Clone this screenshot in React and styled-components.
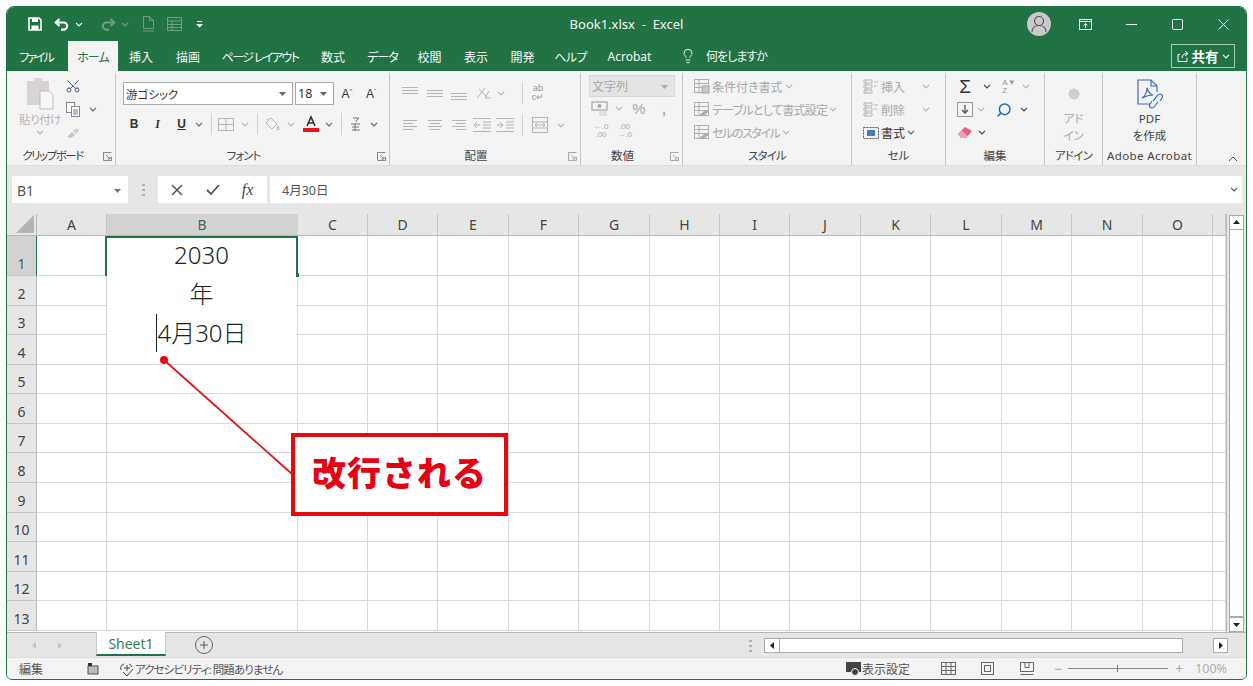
import React from 'react';
import styled, { createGlobalStyle } from 'styled-components';
import { Lightbulb, Search, Scissors } from 'lucide-react';

const FONT = '"Noto Sans", "Noto Sans CJK JP", sans-serif';
const GREEN = '#217346';
const OFF = '#b5b5b5';

const Global = createGlobalStyle`
  html, body { margin: 0; padding: 0; background: #fff; }
  body { font-family: ${FONT}; font-feature-settings: "palt"; color: #333; }
  * { box-sizing: border-box; }
`;

const Win = styled.div`
  position: relative;
  width: 1241px;
  height: 674px;
  margin: 6px 0 0 6px;
  border: 1px solid ${GREEN};
  border-radius: 8px 8px 6px 6px;
  overflow: hidden;
  display: flex;
  flex-direction: column;
  background: #f3f3f3;
`;
const TitleBar = styled.div`
  height: 34px;
  background: ${GREEN};
  display: grid;
  grid-template-columns: 1fr auto 1fr;
  align-items: center;
  color: #fff;
`;
const Qat = styled.div`
  display: flex;
  align-items: center;
  padding-left: 14px;
`;
const Title = styled.div`
  font-size: 13px;
  white-space: pre;
  color: #f2f7f4;
`;
const WinBtns = styled.div`
  display: flex;
  justify-content: flex-end;
  align-items: center;
`;
const Slot = styled.div`
  flex: none;
  width: ${p => p.$w}px;
  margin-left: ${p => p.$ml || 0}px;
  height: 100%;
  display: flex;
  align-items: center;
  justify-content: center;
`;
const Avatar = styled.div`
  width: 24px;
  height: 24px;
  border-radius: 50%;
  background: #c9c9c9;
  display: flex;
  align-items: center;
  justify-content: center;
`;
const TabRow = styled.div`
  height: 30px;
  background: ${GREEN};
  display: flex;
  align-items: stretch;
  padding-left: 1px;
  position: relative;
`;
const Tab = styled.div`
  flex: none;
  width: ${p => p.$w}px;
  margin-left: ${p => p.$ml || 0}px;
  display: flex;
  align-items: center;
  justify-content: center;
  padding-top: 1px;
  font-size: 12px;
  letter-spacing: ${p => p.$ls || 0}px;
  white-space: nowrap;
  color: ${p => (p.$on ? '#2b6e4a' : '#f4f8f6')};
  background: ${p => (p.$on ? '#f3f3f3' : 'transparent')};
`;
const Tell = styled.div`
  display: flex;
  align-items: center;
  gap: 4px;
  margin-left: 17px;
  font-size: 12px;
  letter-spacing: -1px;
  color: #f4f8f6;
`;
const Share = styled.div`
  margin: 3px 11px 3px auto;
  width: 64px;
  display: flex;
  align-items: center;
  justify-content: center;
  gap: 3px;
  border: 1px solid #a5cbb6;
  font-size: 13.5px;
  font-weight: 700;
  color: #fff;
`;

const Ribbon = styled.div`
  height: 94px;
  display: flex;
  padding-left: 1px;
  background: #f3f3f3;
`;
const Group = styled.div`
  flex: none;
  width: ${p => p.$w}px;
  display: flex;
  flex-direction: column;
  margin: 2px 0 0;
  border-right: 1px solid ${p => (p.$plain ? 'transparent' : '#c4c4c4')};
  position: relative;
`;
const GroupBody = styled.div`
  flex: 1;
  min-height: 0;
  display: flex;
  flex-direction: column;
  padding-top: ${p => p.$top ?? 8}px;
  padding-left: ${p => p.$left ?? 0}px;
  gap: ${p => p.$gap ?? 0}px;
`;
const GroupLabel = styled.div`
  height: 18px;
  line-height: 18px;
  margin-bottom: 0;
  padding-right: ${p => (p.$launch ? 18 : 0)}px;
  text-align: center;
  font-size: 11.5px;
  letter-spacing: ${p => p.$ls || 0}px;
  color: #444;
  white-space: nowrap;
`;
const Launch = styled.span`
  position: absolute;
  right: 3px;
  bottom: 4px;
  width: 9px;
  height: 9px;
  display: flex;
`;
const Row = styled.div`
  display: flex;
  align-items: center;
  height: ${p => p.$h}px;
`;
const ClipCols = styled.div`
  display: flex;
  height: 74px;
`;
const PasteCol = styled.div`
  width: 50px;
  display: flex;
  flex-direction: column;
  align-items: center;
  color: ${OFF};
  font-size: 11.5px;
  letter-spacing: -0.5px;
  line-height: 14px;
  gap: 3px;
`;
const SmallCol = styled.div`
  display: flex;
  flex-direction: column;
  gap: 0;
  margin-left: 0;
`;
const Combo = styled.div`
  flex: none;
  width: ${p => p.$w}px;
  height: ${p => p.$h || 23}px;
  margin-left: ${p => p.$ml || 0}px;
  display: flex;
  align-items: center;
  justify-content: space-between;
  padding: 0 5px 0 2px;
  border: 1px solid ${p => (p.$off ? '#d8d8d8' : '#ababab')};
  background: ${p => (p.$off ? '#e4e4e4' : '#fff')};
  color: ${p => (p.$off ? '#a8a8a8' : '#333')};
  font-size: ${p => p.$fs || 11.5}px;
`;
const RowSep = styled.div`
  width: 1px;
  height: 22px;
  background: #d0d0d0;
`;
const Glyph = styled.span`
  font-family: ${p => (p.$serif ? '"Liberation Serif", serif' : '"Liberation Sans", sans-serif')};
  font-weight: ${p => p.$wt || 700};
  font-style: ${p => (p.$it ? 'italic' : 'normal')};
  text-decoration: ${p => (p.$ul ? 'underline' : 'none')};
  font-size: ${p => p.$fs || 12}px;
  color: ${p => p.$c || '#333'};
`;
const StyleRow = styled.div`
  display: flex;
  align-items: center;
  height: 23px;
  gap: 2px;
  font-size: 12px;
  letter-spacing: ${p => p.$ls || 0}px;
  white-space: nowrap;
  color: ${p => (p.$on ? '#333' : '#a9a9a9')};
`;
const BigLabel = styled.div`
  text-align: center;
  font-size: 11.5px;
  line-height: 17px;
  color: ${p => (p.$off ? '#a9a9a9' : '#444')};
`;
const BigIcon = styled.div`
  height: 32px;
  display: flex;
  align-items: center;
  justify-content: center;
`;
const Collapse = styled.div`
  flex: 1;
  display: flex;
  justify-content: flex-end;
  align-items: flex-end;
  padding: 0 8px 3px 0;
`;

const FormulaArea = styled.div`
  height: 49px;
  display: flex;
  align-items: flex-start;
  padding: 10px 4px 0 5px;
  background: #e6e6e6;
  border-top: 1px solid #dcdcdc;
`;
const NameBox = styled.div`
  width: 116px;
  height: 27px;
  background: #fff;
  display: flex;
  align-items: center;
  justify-content: space-between;
  padding: 2px 6px 0 5px;
  font-size: 14px;
  color: #555;
`;
const Dots = styled.div`
  width: 30px;
  height: 27px;
  display: flex;
  align-items: center;
  justify-content: center;
`;
const FxBox = styled.div`
  width: 109px;
  height: 27px;
  background: #fff;
  display: flex;
  align-items: center;
`;
const FxInput = styled.div`
  flex: 1;
  height: 27px;
  margin-left: 3px;
  background: #fff;
  display: flex;
  align-items: center;
  justify-content: space-between;
  padding: 0 4px 0 12px;
  font-size: 12.5px;
  color: #555;
`;

const SheetArea = styled.div`
  position: relative;
  height: 418px;
  display: flex;
  background: #fff;
`;
const SheetGrid = styled.div`
  display: grid;
  grid-template-columns: 30px 70px 191px 70px 70px 71px 70px 71px 70px 70px 71px 70px 71px 70px 71px 70px 13px;
  grid-template-rows: 22px 40px repeat(12, 29.58px);
  width: 1219px;
  overflow: hidden;
  background: #fff;
`;
const Corner = styled.div`
  background: #e6e6e6;
  border-right: 1px solid #b9b9b9;
  border-bottom: 1px solid #b9b9b9;
  display: flex;
  align-items: flex-end;
  justify-content: flex-end;
  padding: 0 2px 2px 0;
`;
const ColHead = styled.div`
  display: flex;
  align-items: center;
  justify-content: center;
  font-size: 14px;
  color: ${p => (p.$on ? '#3f6b54' : '#444')};
  background: ${p => (p.$on ? '#d2d2d2' : '#e6e6e6')};
  border-right: 1px solid ${p => (p.$on ? '#d2d2d2' : '#c6c6c6')};
  border-bottom: 1px solid #b9b9b9;
`;
const RowHead = styled.div`
  display: flex;
  align-items: flex-end;
  justify-content: center;
  padding-bottom: 2px;
  font-size: 14px;
  color: ${p => (p.$on ? '#3f6b54' : '#444')};
  background: ${p => (p.$on ? '#d2d2d2' : '#e6e6e6')};
  border-right: 1px solid ${p => (p.$on ? GREEN : '#b9b9b9')};
  border-bottom: 1px solid #c6c6c6;
`;
const Cell = styled.div`
  border-right: 1px solid #d9d9d9;
  border-bottom: 1px solid #d9d9d9;
`;
const Selection = styled.div`
  position: absolute;
  left: 98px;
  top: 22px;
  width: 193px;
  height: 40px;
  border: solid ${GREEN};
  border-width: 2px 2px 0 2px;
`;
const Handle = styled.div`
  position: absolute;
  left: 288px;
  top: 59px;
  width: 4px;
  height: 4px;
  background: ${GREEN};
`;
const EditBox = styled.div`
  position: absolute;
  left: 100px;
  top: 24px;
  width: 189px;
  height: 126px;
  background: #fff;
  text-align: center;
  font-size: 24px;
  line-height: 33px;
  font-feature-settings: normal;
  color: #222;
  font-weight: 300;
`;
const EditLine = styled.div`
  height: 39px;
`;
const Caret = styled.span`
  display: inline-block;
  width: 1px;
  height: 38px;
  background: #222;
  margin: -10px 0;
`;
const Pointer = styled.svg`
  position: absolute;
  left: 0;
  top: 0;
  pointer-events: none;
`;
const Callout = styled.div`
  position: absolute;
  left: 284px;
  top: 219px;
  width: 217px;
  height: 83px;
  border: 4px solid #e60b0b;
  background: #fff;
  display: flex;
  align-items: center;
  justify-content: center;
  padding-bottom: 7px;
  font-size: 34px;
  font-weight: 900;
  color: #e60012;
  letter-spacing: 1px;
  font-feature-settings: normal;
`;
const VScroll = styled.div`
  flex: 1;
  display: flex;
  flex-direction: column;
  align-items: center;
  padding-top: 1px;
  background: #e6e6e6;
  border-left: 1px solid #b9b9b9;
`;
const ScrollBtn = styled.div`
  flex: none;
  width: ${p => p.$w || 15}px;
  height: 15px;
  background: #fff;
  border: 1px solid #ababab;
  display: flex;
  align-items: center;
  justify-content: center;
`;
const VThumb = styled.div`
  flex: 1;
  width: 15px;
  background: #fff;
  border: 1px solid #ababab;
  border-top: 0;
  margin-bottom: 0;
`;

const TabBar = styled.div`
  height: 25px;
  display: flex;
  align-items: flex-start;
  background: #e6e6e6;
  border-top: 1px solid #b9b9b9;
`;
const SheetTab = styled.div`
  width: 70px;
  height: 24px;
  margin-left: 10px;
  margin-top: -1px;
  background: #fff;
  border-bottom: 2px solid ${GREEN};
  border-left: 1px solid #c6c6c6;
  border-right: 1px solid #c6c6c6;
  display: flex;
  align-items: center;
  justify-content: center;
  font-size: 14px;
  color: #3a7c5b;
`;
const TabNav = styled.div`
  display: flex;
  width: 79px;
  height: 24px;
`;
const AddSheet = styled.div`
  width: 18px;
  height: 18px;
  margin: 3px 0 0 29px;
  border: 1px solid #666;
  border-radius: 50%;
  display: flex;
  align-items: center;
  justify-content: center;
`;
const HScroll = styled.div`
  display: flex;
  align-items: flex-start;
  height: 22px;
  padding-top: 5px;
  margin-left: auto;
  margin-right: 18px;
`;
const HTrack = styled.div`
  width: 403px;
  height: 15px;
  background: #fff;
  border: 1px solid #ababab;
  border-left: 0;
  margin-right: 30px;
`;
const DotCol = styled.div`
  width: 30px;
  height: 15px;
  display: flex;
  align-items: center;
  justify-content: center;
  margin-right: -1px;
`;

const Status = styled.div`
  flex: 1;
  display: flex;
  align-items: center;
  background: #f3f3f3;
  border-top: 1px solid #dcdcdc;
  font-size: 11.5px;
  color: #555;
`;
const Stat = styled.span`
  margin-left: ${p => p.$ml || 0}px;
  color: ${p => p.$c || '#555'};
  font-size: ${p => p.$fs || 11.5}px;
  letter-spacing: ${p => p.$ls || 0}px;
  display: flex;
  align-items: center;
  white-space: nowrap;
`;
const StatRight = styled.div`
  margin-left: auto;
  display: flex;
  align-items: center;
  height: 100%;
`;
const ZoomTrack = styled.div`
  position: relative;
  width: 100px;
  height: 1px;
  background: #8a8a8a;
  margin: 0 7px 0 6px;
`;
const ZoomTick = styled.div`
  position: absolute;
  left: 49px;
  top: -3px;
  width: 1px;
  height: 7px;
  background: #777;
`;

const Chev = ({ c = '#666' }) => (
  <svg width="8" height="5" viewBox="0 0 8 5"><path d="M1 .8l3 3 3-3" fill="none" stroke={c} strokeWidth="1.2" /></svg>
);
const Tri = ({ d, c = '#222' }) => {
  const paths = { up: 'M1 6h7L4.5 2z', down: 'M1 3h7L4.5 7z', left: 'M6 1v7L2 4.5z', right: 'M3 1v7l4-3.5z' };
  return <svg width="9" height="9" viewBox="0 0 9 9"><path d={paths[d]} fill={c} /></svg>;
};
const LaunchIcon = ({ c = '#888' }) => (
  <svg width="9" height="9" viewBox="0 0 9 9" fill="none" stroke={c}><path d="M.5 4V.5h8M.5 .5v8h8V5" /><path d="M3 3l4 4M7 4.5V7H4.5" /></svg>
);
const AlignIcon = ({ v, h }) => {
  const w = [14, 10, 14, 10];
  if (h) {
    const x = i => (h === 'c' ? 1 + (14 - w[i]) / 2 : h === 'r' ? 15 - w[i] : 1);
    return (
      <svg width="16" height="12" viewBox="0 0 16 12" stroke={OFF}>
        {[1.5, 4.5, 7.5, 10.5].map((y, i) => <path key={y} d={`M${x(i)} ${y}h${w[i]}`} />)}
      </svg>
    );
  }
  const y0 = v === 't' ? 1 : v === 'm' ? 4 : 7;
  return (
    <svg width="18" height="14" viewBox="0 0 18 14" stroke={OFF}>
      {[0, 3, 6].map(d => <path key={d} d={`M1 ${y0 + d + 0.5}h16`} />)}
    </svg>
  );
};
const IndentIcon = ({ rev }) => (
  <svg width="18" height="16" viewBox="0 0 18 16" fill="none" stroke={OFF}>
    <path d="M0 1.5h18M0 14.5h18M10 5h8M10 8h8M10 11h8" />
    <path d={rev ? 'M7 8H1m3-3L1 8l3 3' : 'M1 8h6M4 5l3 3-3 3'} stroke="#9db8c9" />
  </svg>
);
const SmallDoc = ({ c = OFF }) => (
  <svg width="16" height="16" viewBox="0 0 16 16" fill="none" stroke={c}><rect x=".5" y="2.5" width="15" height="12" /><path d="M.5 8.500h15M8 2.500v12" /></svg>
);

function Qa() {
  return (
    <Qat>
      <Slot $w={28}>
        <svg width="14" height="14" viewBox="0 0 14 14"><path d="M1 1h10l2 2v10H1z" fill="none" stroke="#fff" strokeWidth="1.6" /><path d="M4 1h6v4H4zM3.5 8.5h7V13h-7z" fill="#fff" /></svg>
      </Slot>
      <Slot $w={26}>
        <svg width="16" height="13" viewBox="0 0 16 13" fill="none" stroke="#fff" strokeWidth="2.2"><path d="M5.5 1L1.8 4.5 5.5 8" /><path d="M2 4.5h7.5a3.6 3.6 0 0 1 0 7.2H7" /></svg>
      </Slot>
      <Slot $w={8}><Chev c="#fff" /></Slot>
      <Slot $w={24} $ml={13}>
        <svg width="16" height="13" viewBox="0 0 16 13" fill="none" stroke="#6d9f85" strokeWidth="2"><path d="M10.5 1l3.7 3.5L10.5 8" /><path d="M14 4.5H6.5a3.6 3.6 0 0 0 0 7.2H9" /></svg>
      </Slot>
      <Slot $w={10}><Chev c="#6d9f85" /></Slot>
      <Slot $w={24} $ml={6}>
        <svg width="13" height="16" viewBox="0 0 13 16" fill="none" stroke="#6d9f85"><path d="M1.5.5h6l4 4v8h-10z" /><path d="M7.5.5v4h4M1 15h11" /></svg>
      </Slot>
      <Slot $w={24} $ml={2}>
        <svg width="15" height="14" viewBox="0 0 15 14" fill="none" stroke="#6d9f85"><rect x=".5" y=".5" width="14" height="13" /><path d="M.5 4h14M.5 7.5h14M.5 10.5h14M5 4v9" /></svg>
      </Slot>
      <Slot $w={20} $ml={3}>
        <svg width="7" height="8" viewBox="0 0 7 8" fill="#fff"><path d="M1 1h5v1H1zM0 4h7L3.5 7.5z" /></svg>
      </Slot>
    </Qat>
  );
}

function Clipboard() {
  return (
    <Group $w={108}>
      <GroupBody $top={1} $left={7}>
        <ClipCols>
          <PasteCol>
            <svg width="28" height="33" viewBox="0 0 28 33" style={{ marginTop: 3 }}>
              <path d="M1 4h7V1h8v3h7v24H1z" fill="#d6d2d6" />
              <path d="M14 14h9l4 4v14H14z" fill="#f5f5f5" stroke="#bdbdbd" />
            </svg>
            <span>貼り付け</span>
            <Chev c={OFF} />
          </PasteCol>
          <SmallCol>
            <Row $h={24}>
              <Slot $w={16}><Scissors size={18} color="#4a5f80" strokeWidth={1.5} style={{ transform: 'rotate(-90deg)' }} /></Slot>
            </Row>
            <Row $h={23}>
              <Slot $w={16}>
                <svg width="14" height="15" viewBox="0 0 14 15" fill="#fff" stroke="#888"><rect x=".5" y=".5" width="8" height="10" /><rect x="5.5" y="4.5" width="8" height="10" /><path d="M7 8h5M7 10h5M7 12h5" stroke="#5b7fa8" /></svg>
              </Slot>
              <Slot $w={24} $ml={0}><Chev /></Slot>
            </Row>
            <Row $h={23}>
              <Slot $w={16}>
                <svg width="14" height="12" viewBox="0 0 14 12"><path d="M1 10l5-5 3 3-4 3z" fill="#c6c6c6" /><path d="M7 4l4-3 2 2-3 4z" fill="#d0d0d0" /></svg>
              </Slot>
            </Row>
          </SmallCol>
        </ClipCols>
      </GroupBody>
      <GroupLabel $launch $ls={-1.5}>クリップボード</GroupLabel>
      <Launch><LaunchIcon /></Launch>
    </Group>
  );
}

function Font() {
  return (
    <Group $w={274}>
      <GroupBody $top={9} $left={7} $gap={7}>
        <Row $h={23}>
          <Combo $w={170}>游ゴシック<Tri d="down" c="#666" /></Combo>
          <Combo $w={39} $ml={2} $fs={12.5}>18<Tri d="down" c="#666" /></Combo>
          <Slot $w={24} $ml={1}><Glyph $fs={12} $wt={400}>A<sup style={{ fontSize: 6 }}>^</sup></Glyph></Slot>
          <Slot $w={24}><Glyph $fs={12} $wt={400}>A<sup style={{ fontSize: 6 }}>ˇ</sup></Glyph></Slot>
        </Row>
        <Row $h={24}>
          <Slot $w={22}><Glyph>B</Glyph></Slot>
          <Slot $w={25}><Glyph $serif $it>I</Glyph></Slot>
          <Slot $w={23}><Glyph $ul>U</Glyph></Slot>
          <Slot $w={12}><Chev /></Slot>
          <Slot $w={12}><RowSep /></Slot>
          <Slot $w={18}><SmallDoc /></Slot>
          <Slot $w={20}><Chev c={OFF} /></Slot>
          <Slot $w={4}><RowSep /></Slot>
          <Slot $w={26}>
            <svg width="16" height="15" viewBox="0 0 16 15" fill="none" stroke={OFF}><path d="M7 1l6 6-5 5-6-6zM3 3l2-2M14 9c1 2 1.500 3 .5 4s-2-1-.5-4z" /></svg>
          </Slot>
          <Slot $w={12}><Chev c={OFF} /></Slot>
          <Slot $w={28}>
            <svg width="18" height="18" viewBox="0 0 18 18">
              <path d="M5 11l4-9 4 9M6.500 8h5" fill="none" stroke="#333" strokeWidth="1.600" />
              <rect x="1" y="13" width="16" height="4" fill="#e0191f" />
            </svg>
          </Slot>
          <Slot $w={8}><Chev /></Slot>
          <Slot $w={16}><RowSep /></Slot>
          <Slot $w={14}>
            <svg width="12" height="15" viewBox="0 0 12 15" fill="none" stroke="#777"><path d="M3 1h6L6 4v1M1 7h9M5 7v7M2 10h7M2 13h8" /></svg>
          </Slot>
          <Slot $w={22}><Chev /></Slot>
        </Row>
      </GroupBody>
      <GroupLabel $launch $ls={-1}>フォント</GroupLabel>
      <Launch><LaunchIcon /></Launch>
    </Group>
  );
}

function Align() {
  return (
    <Group $w={191}>
      <GroupBody $top={8} $left={7} $gap={8}>
        <Row $h={24}>
          <Slot $w={25}><AlignIcon v="t" /></Slot>
          <Slot $w={25}><AlignIcon v="m" /></Slot>
          <Slot $w={24}><AlignIcon v="b" /></Slot>
          <Slot $w={26}>
            <svg width="18" height="14" viewBox="0 0 18 14" fill="none" stroke={OFF}><path d="M2 12L10 2M4 3l8 8M14 5l-4 7h6" /></svg>
          </Slot>
          <Slot $w={8}><Chev c={OFF} /></Slot>
          <Slot $w={24} $ml={5}><RowSep /></Slot>
          <Slot $w={8}>
            <Glyph $fs={9} $wt={400} $c="#999" style={{ lineHeight: '9px', textAlign: 'center' }}>ab<br />c↵</Glyph>
          </Slot>
        </Row>
        <Row $h={24}>
          <Slot $w={25}><AlignIcon h="l" /></Slot>
          <Slot $w={25}><AlignIcon h="c" /></Slot>
          <Slot $w={24}><AlignIcon h="r" /></Slot>
          <Slot $w={22}><IndentIcon rev /></Slot>
          <Slot $w={24}><IndentIcon /></Slot>
          <Slot $w={10}><RowSep /></Slot>
          <Slot $w={26}>
            <svg width="16" height="16" viewBox="0 0 16 16" fill="none" stroke={OFF}><rect x=".5" y=".5" width="15" height="15" /><path d="M.5 5h15M.5 11h15M3 8h10M3 8l2-2M3 8l2 2M13 8l-2-2M13 8l-2 2" /></svg>
          </Slot>
          <Slot $w={16}><Chev c={OFF} /></Slot>
        </Row>
      </GroupBody>
      <GroupLabel $launch>配置</GroupLabel>
      <Launch><LaunchIcon c="#aaa" /></Launch>
    </Group>
  );
}

function Numbers() {
  return (
    <Group $w={102}>
      <GroupBody $top={2} $left={8} $gap={1}>
        <Row $h={22}>
          <Combo $w={86} $h={22} $off $fs={12}>文字列<Tri d="down" c="#aaa" /></Combo>
        </Row>
        <Row $h={21}>
          <Slot $w={20}>
            <svg width="17" height="15" viewBox="0 0 17 15"><rect x="1" y="1" width="15" height="8" fill="none" stroke={OFF} strokeWidth="1.500" /><circle cx="8.500" cy="5" r="2" fill="#8fb59f" /><path d="M8 10h8M8 12h8M8 14h8" stroke="#ccc" /></svg>
          </Slot>
          <Slot $w={20}><Chev c={OFF} /></Slot>
          <Slot $w={20}><Glyph $fs={15} $wt={400} $c="#aaa">%</Glyph></Slot>
          <Slot $w={30}><Glyph $fs={14} $c="#aaa">,</Glyph></Slot>
        </Row>
        <Row $h={22}>
          <Slot $w={24}><Glyph $fs={8} $wt={400} $c="#aaa" style={{ lineHeight: '8px', textAlign: 'center' }}>←.0<br />.00</Glyph></Slot>
          <Slot $w={23}><Glyph $fs={8} $wt={400} $c="#aaa" style={{ lineHeight: '8px', textAlign: 'center' }}>.00<br />→.0</Glyph></Slot>
        </Row>
      </GroupBody>
      <GroupLabel $launch>数値</GroupLabel>
      <Launch><LaunchIcon c="#aaa" /></Launch>
    </Group>
  );
}

const StyleIcon = ({ kind }) => (
  <svg width="16" height="15" viewBox="0 0 16 15" fill="none" stroke="#b0b0b0">
    <rect x=".5" y=".5" width="14" height="13" />
    <path d="M.5 4.500h14M.5 8.500h14M5 .5v13" />
    {kind === 'cond' && <rect x="8" y="7" width="7" height="7" fill="#c8c8c8" stroke="#aaa" />}
    {kind !== 'cond' && <path d="M6 13l6-5 3 1-6 5z" fill="#aaa" />}
  </svg>
);

function Styles() {
  return (
    <Group $w={169}>
      <GroupBody $top={2} $left={11}>
        <StyleRow><StyleIcon kind="cond" /> 条件付き書式 <Chev c={OFF} /></StyleRow>
        <StyleRow $ls={-0.7}><StyleIcon />テーブルとして書式設定 <Chev c={OFF} /></StyleRow>
        <StyleRow $ls={-1.4}><StyleIcon />セルのスタイル <Chev c={OFF} /></StyleRow>
      </GroupBody>
      <GroupLabel $ls={-0.8}>スタイル</GroupLabel>
    </Group>
  );
}

const CellIcon = ({ c = OFF }) => (
  <svg width="16" height="15" viewBox="0 0 16 15" fill="none" stroke={c}><path d="M1 1h8v3H1zM1 6h8v3H1zM1 11h8v3H1zM11 3h4M11 7h3M3 1v13" /></svg>
);

function Cells() {
  return (
    <Group $w={94}>
      <GroupBody $top={2} $left={11}>
        <StyleRow><CellIcon />挿入<Slot $w={30} $ml={4}><Chev c={OFF} /></Slot></StyleRow>
        <StyleRow><CellIcon />削除<Slot $w={30} $ml={4}><Chev c={OFF} /></Slot></StyleRow>
        <StyleRow $on>
          <svg width="16" height="15" viewBox="0 0 16 15" fill="none" stroke="#555"><rect x=".5" y="2.500" width="15" height="11" strokeDasharray="2 1" /><rect x="4" y="5" width="8" height="6" fill="#3f7fbf" stroke="none" /></svg>
          書式 <Chev />
        </StyleRow>
      </GroupBody>
      <GroupLabel>セル</GroupLabel>
    </Group>
  );
}

function Edit() {
  return (
    <Group $w={99}>
      <GroupBody $top={2} $left={10}>
        <Row $h={23}>
          <Slot $w={18}><Glyph $fs={19} $wt={400} $c="#333">Σ</Glyph></Slot>
          <Slot $w={26}><Chev c="#444" /></Slot>
          <Slot $w={18}><Glyph $fs={8} $wt={400} $c="#999" style={{ lineHeight: '8px' }}>A▼<br />Z</Glyph></Slot>
          <Slot $w={16}><Chev c={OFF} /></Slot>
        </Row>
        <Row $h={23}>
          <Slot $w={18}>
            <svg width="16" height="15" viewBox="0 0 16 15" fill="none" stroke="#999"><rect x=".5" y=".5" width="15" height="14" /><path d="M8 3v8M5 8l3 3 3-3" stroke="#555" strokeWidth="1.300" /></svg>
          </Slot>
          <Slot $w={14}><Chev c={OFF} /></Slot>
          <Slot $w={32}><Search size={16} color="#1f6cb5" strokeWidth={2.2} style={{ transform: 'scaleX(-1)' }} /></Slot>
          <Slot $w={8}><Chev c="#444" /></Slot>
        </Row>
        <Row $h={23}>
          <Slot $w={18}>
            <svg width="16" height="13" viewBox="0 0 16 13"><path d="M1 8l7-7 7 4-6 7H4z" fill="#e0607e" /><path d="M1 8l3 4h5l1.500-2-5-5z" fill="#f0a0b4" /></svg>
          </Slot>
          <Slot $w={16}><Chev c="#444" /></Slot>
        </Row>
      </GroupBody>
      <GroupLabel>編集</GroupLabel>
    </Group>
  );
}

function Addin() {
  return (
    <Group $w={58}>
      <GroupBody $top={5}>
        <BigIcon>
          <svg width="12" height="12"><circle cx="6" cy="6" r="5.500" fill="#cfcfcf" /></svg>
        </BigIcon>
        <BigLabel $off>アド<br />イン</BigLabel>
      </GroupBody>
      <GroupLabel $ls={-0.8}>アドイン</GroupLabel>
    </Group>
  );
}

function AdobeGroup() {
  return (
    <Group $w={94}>
      <GroupBody $top={5}>
        <BigIcon>
          <svg width="28" height="30" viewBox="0 0 28 30" fill="none" stroke="#3b6fb5" strokeWidth="1.200">
            <path d="M14 25H2V1h13l6 6v6" />
            <path d="M15 1v6h6" />
            <path d="M6 19c3-2 5-6 5-10 1 4 3 6 6 7-3 0-7 1-11 3z" />
            <path d="M17 22l5-6a2.500 2.500 0 0 1 4 3l-2 3M22 23l-4 5a2.500 2.500 0 0 1-4-3l2-3" />
          </svg>
        </BigIcon>
        <BigLabel>PDF<br />を作成</BigLabel>
      </GroupBody>
      <GroupLabel $ls={0.4}>Adobe Acrobat</GroupLabel>
    </Group>
  );
}

const COLS = ['A', 'B', 'C', 'D', 'E', 'F', 'G', 'H', 'I', 'J', 'K', 'L', 'M', 'N', 'O', ''];
const ROWS = [1, 2, 3, 4, 5, 6, 7, 8, 9, 10, 11, 12, 13];
const TABS = [
  ['ファイル', 56, 0, -2], ['ホーム', 50, 4, -1], ['挿入', 46], ['描画', 48], ['ページ レイアウト', 96, 0, -1.6], ['数式', 50],
  ['データ', 49, 0, -1], ['校閲', 45], ['表示', 48], ['開発', 45], ['ヘルプ', 51, 0, -0.6], ['Acrobat', 67],
];

export default function App() {
  return (
    <>
      <Global />
      <Win>
        <TitleBar>
          <Qa />
          <Title>Book1.xlsx  -  Excel</Title>
          <WinBtns>
            <Slot $w={46}>
              <Avatar>
                <svg width="16" height="18" viewBox="0 0 16 18" fill="none" stroke="#555" strokeWidth="1.200"><circle cx="8" cy="6" r="4.500" /><path d="M1 17c0-4 3-6.500 7-6.500s7 2.500 7 6.500" /></svg>
              </Avatar>
            </Slot>
            <Slot $w={46}>
              <svg width="13" height="11" viewBox="0 0 13 11" fill="none" stroke="#fff"><rect x=".5" y=".5" width="12" height="10" /><path d="M.5 2.500h12M6.500 9V4.500M4.500 6.500l2-2 2 2" /></svg>
            </Slot>
            <Slot $w={46}><svg width="11" height="1"><rect width="11" height="1" fill="#fff" /></svg></Slot>
            <Slot $w={46}><svg width="11" height="11" fill="none" stroke="#fff"><rect x=".5" y=".5" width="10" height="10" rx="1" /></svg></Slot>
            <Slot $w={46}><svg width="11" height="11" fill="none" stroke="#fff"><path d="M.5 .5l10 10M10.500 .5l-10 10" /></svg></Slot>
          </WinBtns>
        </TitleBar>
        <TabRow>
          {TABS.map(([t, w, ml, ls]) => (
            <Tab key={t} $w={w} $ml={ml} $ls={ls} $on={t === 'ホーム'}>{t}</Tab>
          ))}
          <Tell>
            <Lightbulb size={16} color="#fff" strokeWidth={1.300} style={{ margin: '0 6px 0 0' }} />
            何をしますか
          </Tell>
          <Share>
            <svg width="12" height="12" viewBox="0 0 12 12" fill="none" stroke="#fff"><path d="M3 4.500H1v7h9V8M5 8c0-3 2-4.500 5-4.500M8 1l3 2.500L8 6" /></svg>
            共有
            <Chev c="#fff" />
          </Share>
        </TabRow>
        <Ribbon>
          <Clipboard />
          <Font />
          <Align />
          <Numbers />
          <Styles />
          <Cells />
          <Edit />
          <Addin />
          <AdobeGroup />
          <Collapse>
            <svg width="10" height="6" viewBox="0 0 10 6" fill="none" stroke="#555"><path d="M1 5l4-4 4 4" /></svg>
          </Collapse>
        </Ribbon>
        <FormulaArea>
          <NameBox>B1<Tri d="down" c="#777" /></NameBox>
          <Dots><svg width="3" height="12" fill="#b0b0b0"><rect width="3" height="2" /><rect y="5" width="3" height="2" /><rect y="10" width="3" height="2" /></svg></Dots>
          <FxBox>
            <Slot $w={37}><svg width="12" height="12" fill="none" stroke="#555" strokeWidth="1.500"><path d="M1 1l10 10M11 1L1 11" /></svg></Slot>
            <Slot $w={35}><svg width="14" height="11" fill="none" stroke="#555" strokeWidth="1.800"><path d="M1 6l4 4 8-9" /></svg></Slot>
            <Slot $w={35}><Glyph $serif $it $wt={400} $fs={16} $c="#444">fx</Glyph></Slot>
          </FxBox>
          <FxInput>4月30日<Chev c="#555" /></FxInput>
        </FormulaArea>
        <SheetArea>
          <SheetGrid>
            <Corner>
              <svg width="18" height="18"><path d="M18 0v18H0z" fill="#b4b4b4" /></svg>
            </Corner>
            {COLS.map(c => <ColHead key={c || 'end'} $on={c === 'B'}>{c}</ColHead>)}
            {ROWS.map(r => (
              <React.Fragment key={r}>
                <RowHead $on={r === 1}>{r}</RowHead>
                {COLS.map(c => <Cell key={c || 'end'} />)}
              </React.Fragment>
            ))}
          </SheetGrid>
          <VScroll>
            <ScrollBtn><Tri d="up" /></ScrollBtn>
            <VThumb />
            <ScrollBtn><Tri d="down" /></ScrollBtn>
          </VScroll>
          <Selection />
          <Handle />
          <EditBox>
            <EditLine>2030</EditLine>
            <EditLine>年</EditLine>
            <EditLine><Caret />4月30日</EditLine>
          </EditBox>
          <Pointer width="300" height="270" viewBox="0 0 300 270">
            <circle cx="157" cy="146" r="4" fill="#e60b0b" />
            <path d="M157 146L285 260" stroke="#d9191c" strokeWidth="1.800" />
          </Pointer>
          <Callout>改行される</Callout>
        </SheetArea>
        <TabBar>
          <TabNav>
            <Slot $w={26} $ml={14}><Tri d="left" c="#c4c4c4" /></Slot>
            <Slot $w={24}><Tri d="right" c="#c4c4c4" /></Slot>
          </TabNav>
          <SheetTab>Sheet1</SheetTab>
          <AddSheet>
            <svg width="10" height="10" stroke="#555"><path d="M5 1v8M1 5h8" /></svg>
          </AddSheet>
          <HScroll>
            <DotCol><svg width="3" height="12" fill="#b0b0b0"><rect width="3" height="2" /><rect y="5" width="3" height="2" /><rect y="10" width="3" height="2" /></svg></DotCol>
            <ScrollBtn $w={16}><Tri d="left" /></ScrollBtn>
            <HTrack />
            <ScrollBtn><Tri d="right" /></ScrollBtn>
          </HScroll>
        </TabBar>
        <Status>
          <Stat $ml={12} $fs={12}>編集</Stat>
          <Stat $ml={44}>
            <svg width="12" height="12" viewBox="0 0 12 12"><rect x="1" y="3" width="10" height="8" fill="#bbb" stroke="#555" /><rect x="1" y="0" width="4" height="3" fill="#333" /></svg>
          </Stat>
          <Stat $ml={20} $ls={-0.9}>
            <svg width="16" height="16" viewBox="0 0 16 16" fill="none" stroke="#444"><path d="M2 9a5 5 0 0 1 3-6M10 3a5 5 0 0 1 3 3M5 7h6M8 4v6M4 11l4 4 6-7" /></svg>
            アクセシビリティ: 問題ありません
          </Stat>
          <StatRight>
            <Stat $fs={12}>
              <svg width="16" height="14" viewBox="0 0 16 14"><rect y="0" width="15" height="10" fill="#444" /><circle cx="9" cy="10" r="3.500" fill="#444" stroke="#f3f3f3" /></svg>
              表示設定
            </Stat>
            <Stat $ml={31}><svg width="15" height="13" fill="none" stroke="#666"><rect x=".5" y=".5" width="14" height="12" /><path d="M5 .5v12M10 .5v12M.5 4.500h14M.5 8.500h14" /></svg></Stat>
            <Stat $ml={25}><svg width="13" height="13" fill="none" stroke="#666"><rect x=".5" y=".5" width="12" height="12" /><rect x="3.500" y="3.500" width="6" height="6" /></svg></Stat>
            <Stat $ml={26}><svg width="14" height="13" fill="none" stroke="#666"><path d="M.5 .5h13v9h-13zM.5 12.500h13M5 .5v5h4v-5" /></svg></Stat>
            <Stat $ml={20} $c="#aaa" $fs={14}>−</Stat>
            <ZoomTrack><ZoomTick /></ZoomTrack>
            <Stat $c="#aaa" $fs={14}>+</Stat>
            <Stat $ml={12} $c="#b0b0b0" $fs={12.500}>100%</Stat>
            <Stat $ml={19} />
          </StatRight>
        </Status>
      </Win>
    </>
  );
}
